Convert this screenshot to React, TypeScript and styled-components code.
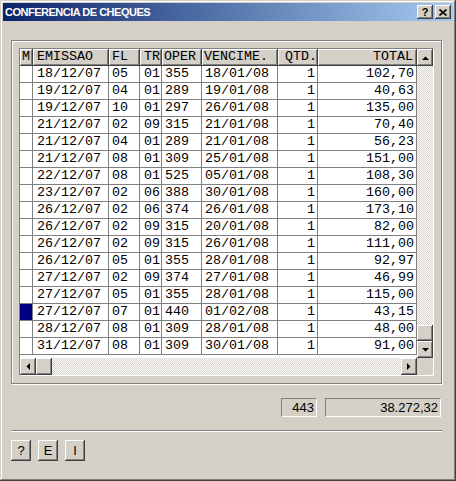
import React from "react";
import styled, { createGlobalStyle } from "styled-components";

const Global = createGlobalStyle`
  html, body { margin: 0; padding: 0; background: #d4d0c8; }
  * { box-sizing: border-box; }
`;

const FACE = "#d4d0c8";
const raised = `
  background: ${FACE};
  box-shadow: inset -1px -1px 0 #404040, inset 1px 1px 0 #ffffff,
    inset -2px -2px 0 #808080, inset 2px 2px 0 ${FACE};
`;

const Win = styled.div`
  width: 456px;
  height: 481px;
  padding: 3px;
  background: ${FACE};
  box-shadow: inset -1px -1px 0 #404040, inset 1px 1px 0 ${FACE},
    inset -2px -2px 0 #808080, inset 2px 2px 0 #ffffff;
  display: flex;
  flex-direction: column;
  font-family: "Liberation Sans", Arial, sans-serif;
`;

const TitleBar = styled.div`
  height: 18px;
  display: flex;
  align-items: center;
  justify-content: space-between;
  padding: 0 2px;
  background: linear-gradient(to right, #0a246a, #a6caf0);
`;

const TitleText = styled.span`
  color: #fff;
  font-weight: bold;
  font-size: 11px;
  letter-spacing: -0.5px;
  white-space: nowrap;
`;

const CaptionButtons = styled.div`
  display: flex;
  gap: 2px;
`;

const CaptionButton = styled.div`
  ${raised}
  width: 16px;
  height: 14px;
  display: flex;
  align-items: center;
  justify-content: center;
  font-weight: bold;
  font-size: 11px;
  color: #000;
  line-height: 1;
`;

const Content = styled.div`
  display: flex;
  flex-direction: column;
  padding: 19px 0 0 8px;
`;

const Panel = styled.div`
  width: 431px;
  height: 344px;
  border: 1px solid #808080;
  box-shadow: 1px 1px 0 #ffffff, inset 1px 1px 0 #ffffff;
  padding: 7px;
`;

const GridBox = styled.div`
  width: 415px;
  height: 328px;
  border: 1px solid;
  border-color: #808080 #ffffff #ffffff #808080;
  display: grid;
  grid-template-columns: 397px 16px;
  grid-template-rows: 309px 17px;
`;

const TableArea = styled.div`
  background: #fff;
  overflow: hidden;
`;

const COLS = "13px 76px 31px 22px 40px 76px 40px 99px";

const Row = styled.div`
  display: grid;
  grid-template-columns: ${COLS};
  height: 17px;
`;

const mono = `
  font-family: "Liberation Mono", "Courier New", monospace;
  font-size: 13.33px;
  line-height: 16px;
  white-space: nowrap;
  overflow: hidden;
`;

const HeadCell = styled.div<{ $align: string; $pad: number }>`
  ${mono}
  background: ${FACE};
  border-right: 1px solid #404040;
  border-bottom: 1px solid #404040;
  box-shadow: inset 1px 1px 0 #ffffff, inset -1px -1px 0 #808080;
  text-align: ${(p) => p.$align};
  padding: ${(p) => (p.$align === "right" ? `0 ${p.$pad}px 0 0` : `0 0 0 ${p.$pad}px`)};
  color: #000;
`;

const Cell = styled.div<{ $align: string; $pad: number; $marked?: boolean }>`
  ${mono}
  border-right: 1px solid #808080;
  border-bottom: 1px solid #808080;
  background: ${(p) => (p.$marked ? "#000080" : "#fff")};
  text-align: ${(p) => p.$align};
  padding: ${(p) => (p.$align === "right" ? `0 ${p.$pad}px 0 0` : `0 0 0 ${p.$pad}px`)};
  color: #000;
`;

const VScroll = styled.div`
  display: flex;
  flex-direction: column;
`;

const HScroll = styled.div`
  display: flex;
`;

const Track = styled.div`
  flex: 1;
  background-color: #fff;
  background-image: conic-gradient(${FACE} 25%, transparent 0 50%, ${FACE} 0 75%, transparent 0);
  background-size: 2px 2px;
`;

const ScrollBtn = styled.div<{ $w: number; $h: number }>`
  ${raised}
  width: ${(p) => p.$w}px;
  height: ${(p) => p.$h}px;
  flex: none;
  display: flex;
  align-items: center;
  justify-content: center;
`;

const Corner = styled.div`
  background: ${FACE};
`;

const Totals = styled.div`
  width: 430px;
  margin-top: 14px;
  display: flex;
  justify-content: flex-end;
  gap: 8px;
`;

const NumBox = styled.div<{ $w: number }>`
  width: ${(p) => p.$w}px;
  height: 19px;
  border: 1px solid;
  border-color: #808080 #ffffff #ffffff #808080;
  font-size: 13px;
  line-height: 17px;
  text-align: right;
  padding-right: 2px;
  color: #000;
`;

const Separator = styled.div`
  width: 431px;
  height: 1px;
  margin-top: 13px;
  background: #808080;
  box-shadow: 0 1px 0 #ffffff;
`;

const ButtonBar = styled.div`
  display: flex;
  gap: 7px;
  margin-top: 9px;
`;

const PushButton = styled.div`
  ${raised}
  width: 20px;
  height: 21px;
  display: flex;
  align-items: center;
  justify-content: center;
  font-size: 13px;
  color: #000;
`;

const Arrow = ({ dir }: { dir: "up" | "down" | "left" | "right" }) => {
  const pts: Record<string, string> = {
    up: "0,4 7,4 3.5,0.5",
    down: "0,0 7,0 3.5,3.5",
    left: "4,0 4,7 0.5,3.5",
    right: "0,0 0,7 3.5,3.5",
  };
  const vert = dir === "up" || dir === "down";
  return (
    <svg width={vert ? 7 : 4} height={vert ? 4 : 7} viewBox={vert ? "0 0 7 4" : "0 0 4 7"}>
      <polygon points={pts[dir]} fill="#000" />
    </svg>
  );
};

type Col = { title: string; align: string; hp: number; cp: number };
const columns: Col[] = [
  { title: "M", align: "left", hp: 2, cp: 3 },
  { title: "EMISSAO", align: "left", hp: 4, cp: 4 },
  { title: "FL", align: "left", hp: 3, cp: 3 },
  { title: "TR", align: "left", hp: 4, cp: 4 },
  { title: "OPER", align: "left", hp: 2, cp: 3 },
  { title: "VENCIME.", align: "left", hp: 2, cp: 3 },
  { title: "QTD.", align: "left", hp: 7, cp: 2 },
  { title: "TOTAL", align: "right", hp: 3, cp: 2 },
];

const rows: string[][] = [
  ["18/12/07", "05", "01", "355", "18/01/08", "1", "102,70"],
  ["19/12/07", "04", "01", "289", "19/01/08", "1", "40,63"],
  ["19/12/07", "10", "01", "297", "26/01/08", "1", "135,00"],
  ["21/12/07", "02", "09", "315", "21/01/08", "1", "70,40"],
  ["21/12/07", "04", "01", "289", "21/01/08", "1", "56,23"],
  ["21/12/07", "08", "01", "309", "25/01/08", "1", "151,00"],
  ["22/12/07", "08", "01", "525", "05/01/08", "1", "108,30"],
  ["23/12/07", "02", "06", "388", "30/01/08", "1", "160,00"],
  ["26/12/07", "02", "06", "374", "26/01/08", "1", "173,10"],
  ["26/12/07", "02", "09", "315", "20/01/08", "1", "82,00"],
  ["26/12/07", "02", "09", "315", "26/01/08", "1", "111,00"],
  ["26/12/07", "05", "01", "355", "28/01/08", "1", "92,97"],
  ["27/12/07", "02", "09", "374", "27/01/08", "1", "46,99"],
  ["27/12/07", "05", "01", "355", "28/01/08", "1", "115,00"],
  ["27/12/07", "07", "01", "440", "01/02/08", "1", "43,15"],
  ["28/12/07", "08", "01", "309", "28/01/08", "1", "48,00"],
  ["31/12/07", "08", "01", "309", "30/01/08", "1", "91,00"],
];
const SELECTED = 14;

export default function App() {
  return (
    <>
      <Global />
      <Win>
        <TitleBar>
          <TitleText>CONFERENCIA DE CHEQUES</TitleText>
          <CaptionButtons>
            <CaptionButton>?</CaptionButton>
            <CaptionButton>
              <svg width="8" height="7" viewBox="0 0 8 7">
                <path d="M0.5 0.5 L7.5 6.5 M7.5 0.5 L0.5 6.5" stroke="#000" strokeWidth="1.6" />
              </svg>
            </CaptionButton>
          </CaptionButtons>
        </TitleBar>
        <Content>
          <Panel>
            <GridBox>
              <TableArea>
                <Row>
                  {columns.map((c) => (
                    <HeadCell key={c.title} $align={c.align} $pad={c.hp}>
                      {c.title}
                    </HeadCell>
                  ))}
                </Row>
                {rows.map((r, i) => (
                  <Row key={i}>
                    <Cell $align="left" $pad={0} $marked={i === SELECTED} />
                    {r.map((v, j) => (
                      <Cell key={j} $align={columns[j + 1].align === "right" || j === 5 ? "right" : "left"} $pad={columns[j + 1].cp}>
                        {v}
                      </Cell>
                    ))}
                  </Row>
                ))}
              </TableArea>
              <VScroll>
                <ScrollBtn $w={16} $h={17}>
                  <Arrow dir="up" />
                </ScrollBtn>
                <Track />
                <ScrollBtn $w={16} $h={16} />
                <ScrollBtn $w={16} $h={17}>
                  <Arrow dir="down" />
                </ScrollBtn>
              </VScroll>
              <HScroll>
                <ScrollBtn $w={16} $h={17}>
                  <Arrow dir="left" />
                </ScrollBtn>
                <ScrollBtn $w={16} $h={17} />
                <Track />
                <ScrollBtn $w={16} $h={17}>
                  <Arrow dir="right" />
                </ScrollBtn>
              </HScroll>
              <Corner />
            </GridBox>
          </Panel>
          <Totals>
            <NumBox $w={36}>443</NumBox>
            <NumBox $w={116}>38.272,32</NumBox>
          </Totals>
          <Separator />
          <ButtonBar>
            <PushButton>?</PushButton>
            <PushButton>E</PushButton>
            <PushButton>I</PushButton>
          </ButtonBar>
        </Content>
      </Win>
    </>
  );
}
